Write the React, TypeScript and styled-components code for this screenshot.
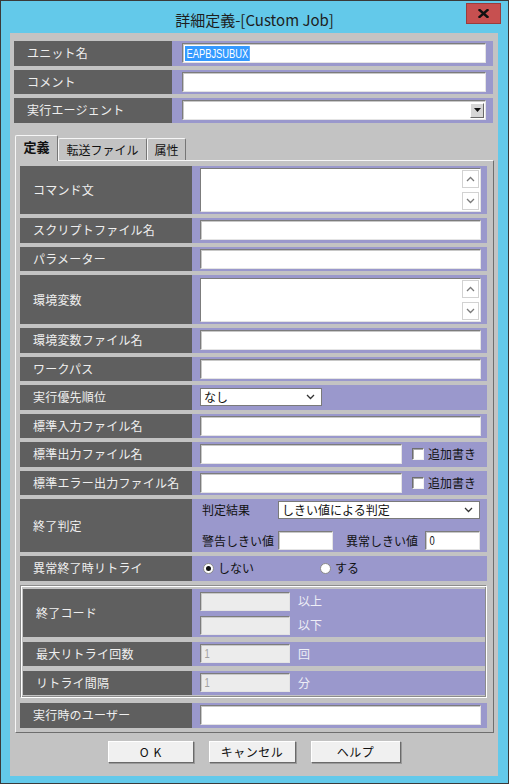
import styled, { createGlobalStyle } from 'styled-components';

const GlobalStyle = createGlobalStyle`
  html, body {
    margin: 0;
    padding: 0;
  }
  body {
    font-family: "Noto Sans CJK JP", "Noto Sans", sans-serif;
    line-height: 14px;
  }
`;

const Window = styled.div`
  box-sizing: border-box;
  width: 509px;
  height: 784px;
  border: 1px solid #3a3a3a;
  background: #63c9ea;
  display: flex;
  flex-direction: column;
`;

const TitleBar = styled.div`
  height: 32px;
  flex-shrink: 0;
  display: grid;
  grid-template-columns: 1fr auto 1fr;
  align-items: start;
`;

const Title = styled.div`
  grid-column: 2;
  padding-top: 9px;
  font-size: 15px;
  line-height: 20px;
  color: #1e1e1e;
  white-space: nowrap;
`;

const CloseButton = styled.div`
  grid-column: 3;
  justify-self: end;
  box-sizing: border-box;
  width: 35px;
  height: 21px;
  margin-top: 2px;
  margin-right: 7px;
  background: #c75050;
  border: 1px solid #9a3c3c;
  display: flex;
  align-items: center;
  justify-content: center;
`;

const Body = styled.div`
  flex: 1;
  margin: 0 10px 7px 9px;
  background: #c3c3c3;
  padding-top: 8px;
  display: flex;
  flex-direction: column;
`;

const TopFields = styled.div`
  margin: 0 5px 0 4px;
  display: flex;
  flex-direction: column;
  gap: 4px;
`;

const Row = styled.div<{ $h?: number; $labelW?: number }>`
  display: grid;
  grid-template-columns: ${(p) => p.$labelW ?? 172}px 1fr;
  height: ${(p) => p.$h ?? 24.5}px;
  flex-shrink: 0;
`;

const RowLabel = styled.div`
  background: #5f5f5f;
  color: #efefef;
  font-size: 12px;
  letter-spacing: 0.2px;
  padding-left: 13px;
  display: flex;
  align-items: center;
  white-space: nowrap;
`;

const RowCell = styled.div<{ $pl?: number; $pr?: number; $col?: boolean; $gap?: number }>`
  background: #9a98cc;
  min-width: 0;
  display: flex;
  flex-direction: ${(p) => (p.$col ? 'column' : 'row')};
  align-items: ${(p) => (p.$col ? 'stretch' : 'center')};
  justify-content: ${(p) => (p.$col ? 'center' : 'flex-start')};
  gap: ${(p) => p.$gap ?? 0}px;
  padding: 0 ${(p) => p.$pr ?? 6}px 0 ${(p) => p.$pl ?? 8}px;
`;

const CellLine = styled.div`
  display: flex;
  align-items: center;
`;

const TextBox = styled.div<{ $w?: number; $h?: number; $disabled?: boolean }>`
  box-sizing: border-box;
  height: ${(p) => p.$h ?? 20}px;
  ${(p) => (p.$w ? `width: ${p.$w}px; flex-shrink: 0;` : 'flex: 1;')}
  background: ${(p) => (p.$disabled ? '#ececec' : '#ffffff')};
  border: 1px solid;
  border-color: #7c7c7c #e4e4e4 #e4e4e4 #7c7c7c;
  box-shadow: inset 1px 1px 0 #c8c8c8;
  padding: 0 1px 0 2px;
  display: flex;
  align-items: center;
  overflow: hidden;
  white-space: nowrap;
  font-family: "Liberation Sans", Arial, sans-serif;
  font-size: 12px;
  color: ${(p) => (p.$disabled ? '#a0a0a0' : '#111111')};
`;

const NarrowText = styled.span<{ $selected?: boolean }>`
  display: inline-block;
  font-family: "Liberation Sans", Arial, sans-serif;
  font-size: 13px;
  line-height: 15px;
  padding: 0 2px;
  transform: scaleX(0.72);
  transform-origin: left center;
  background: ${(p) => (p.$selected ? '#3399ff' : 'transparent')};
  color: ${(p) => (p.$selected ? '#ffffff' : 'inherit')};
`;

const ComboButton = styled.div`
  box-sizing: border-box;
  margin-left: auto;
  width: 14px;
  height: 15px;
  background: #d6d6d6;
  border: 1px solid;
  border-color: #ffffff #6a6a6a #6a6a6a #ffffff;
  display: flex;
  align-items: center;
  justify-content: center;
`;

const MultiBox = styled.div`
  box-sizing: border-box;
  flex: 1;
  height: 44px;
  background: #ffffff;
  border: 1px solid;
  border-color: #7c7c7c #e4e4e4 #e4e4e4 #7c7c7c;
  padding: 1px;
  display: flex;
  justify-content: flex-end;
`;

const ScrollTrack = styled.div`
  width: 17px;
  display: flex;
  flex-direction: column;
  justify-content: space-between;
`;

const ScrollButton = styled.div`
  box-sizing: border-box;
  height: 18px;
  border: 1px solid #d2d2d2;
  background: #ffffff;
  display: flex;
  align-items: center;
  justify-content: center;
`;

const DropSelect = styled.div<{ $w?: number }>`
  box-sizing: border-box;
  height: 18px;
  ${(p) => (p.$w ? `width: ${p.$w}px; flex-shrink: 0;` : 'flex: 1;')}
  background: #ffffff;
  border: 1px solid #7a7a7a;
  padding: 0 6px 0 3px;
  display: flex;
  align-items: center;
  justify-content: space-between;
  font-size: 12px;
  color: #111111;
  white-space: nowrap;
`;

const Caption = styled.span<{ $w?: number; $ml?: number }>`
  font-size: 12px;
  color: #111111;
  white-space: nowrap;
  flex-shrink: 0;
  ${(p) => (p.$w ? `width: ${p.$w}px;` : '')}
  margin-left: ${(p) => p.$ml ?? 0}px;
`;

const UnitText = styled.span`
  font-size: 12px;
  color: #eeeef6;
  margin-left: 8px;
`;

const CheckItem = styled.div`
  display: flex;
  align-items: center;
  gap: 4px;
  margin-left: 10px;
  font-size: 12px;
  color: #111111;
  white-space: nowrap;
`;

const CheckBox = styled.span`
  box-sizing: border-box;
  width: 12px;
  height: 12px;
  background: #ffffff;
  border: 1px solid;
  border-color: #6e6e6e #f2f2f2 #f2f2f2 #6e6e6e;
  box-shadow: inset 1px 1px 0 #a9a9a9;
`;

const RadioItem = styled.div<{ $w?: number }>`
  display: flex;
  align-items: center;
  gap: 4px;
  ${(p) => (p.$w ? `width: ${p.$w}px;` : '')}
  font-size: 12px;
  color: #111111;
  white-space: nowrap;
`;

const Radio = styled.span<{ $on?: boolean }>`
  box-sizing: border-box;
  width: 11px;
  height: 11px;
  border-radius: 50%;
  background: #ffffff;
  border: 1px solid #8a8a8a;
  display: inline-flex;
  align-items: center;
  justify-content: center;
  &::after {
    content: '';
    width: 5px;
    height: 5px;
    border-radius: 50%;
    background: ${(p) => (p.$on ? '#111111' : 'transparent')};
  }
`;

const TabArea = styled.div`
  margin: 12.5px 4px 0 5px;
  display: flex;
  flex-direction: column;
`;

const TabStrip = styled.div`
  height: 25px;
  display: flex;
  align-items: flex-end;
`;

const Tab = styled.div<{ $active?: boolean; $w: number }>`
  box-sizing: border-box;
  position: relative;
  z-index: ${(p) => (p.$active ? 1 : 0)};
  width: ${(p) => p.$w}px;
  height: ${(p) => (p.$active ? 26 : 22)}px;
  margin-bottom: ${(p) => (p.$active ? -1 : 0)}px;
  background: #c3c3c3;
  border: 1px solid;
  border-color: #f6f6f6 #767676 transparent #f6f6f6;
  border-bottom: none;
  border-radius: 2px 2px 0 0;
  display: flex;
  align-items: center;
  justify-content: center;
  padding-bottom: ${(p) => (p.$active ? 3 : 0)}px;
  font-size: ${(p) => (p.$active ? 13 : 12)}px;
  font-weight: ${(p) => (p.$active ? 700 : 400)};
  color: #111111;
  white-space: nowrap;
`;

const TabPanel = styled.div`
  border: 1px solid;
  border-color: #f6f6f6 #6e6e6e #6e6e6e #f6f6f6;
  padding: 5px 6px 4px 4px;
  display: flex;
  flex-direction: column;
  gap: 4px;
`;

const GroupBox = styled.div`
  margin: 0.5px 0 1px;
  border: 1px solid;
  border-color: #8c8c8c #ffffff #ffffff #8c8c8c;
  box-shadow: inset 1px 1px 0 #ffffff, inset -1px -1px 0 #8c8c8c;
  padding: 3px 1px 2.5px 2px;
  display: flex;
  flex-direction: column;
  gap: 4.5px;
`;

const ButtonBar = styled.div`
  margin-top: 8.5px;
  display: flex;
  justify-content: center;
  gap: 15px;
`;

const DialogButton = styled.div<{ $w: number; $spaced?: boolean }>`
  box-sizing: border-box;
  width: ${(p) => p.$w}px;
  height: 22px;
  background: #f0f0f0;
  border: 1px solid;
  border-color: #ffffff #6a6a6a #6a6a6a #ffffff;
  box-shadow: 1px 1px 0 #9a9a9a;
  display: flex;
  align-items: center;
  justify-content: center;
  font-size: 12px;
  color: #111111;
  letter-spacing: ${(p) => (p.$spaced ? 5 : 0.5)}px;
  padding-left: ${(p) => (p.$spaced ? 5 : 0)}px;
`;

const Chevron = ({ up, color = '#7a7a7a' }: { up?: boolean; color?: string }) => (
  <svg width="9" height="6" viewBox="0 0 9 6">
    <polyline
      points={up ? '1,5 4.5,1.5 8,5' : '1,1 4.5,4.5 8,1'}
      fill="none"
      stroke={color}
      strokeWidth="1.3"
    />
  </svg>
);

const Triangle = () => (
  <svg width="7" height="4" viewBox="0 0 7 4">
    <polygon points="0,0 7,0 3.5,4" fill="#111" />
  </svg>
);

const CloseGlyph = () => (
  <svg width="11" height="9" viewBox="0 0 11 9">
    <path d="M1.5 1 L9.5 8 M9.5 1 L1.5 8" stroke="#111" strokeWidth="2.4" strokeLinecap="square" />
  </svg>
);

function MultiLine() {
  return (
    <MultiBox>
      <ScrollTrack>
        <ScrollButton>
          <Chevron up />
        </ScrollButton>
        <ScrollButton>
          <Chevron />
        </ScrollButton>
      </ScrollTrack>
    </MultiBox>
  );
}

export default function App() {
  return (
    <>
      <GlobalStyle />
      <Window>
        <TitleBar>
          <Title>詳細定義-[Custom Job]</Title>
          <CloseButton>
            <CloseGlyph />
          </CloseButton>
        </TitleBar>
        <Body>
          <TopFields>
            <Row $labelW={158}>
              <RowLabel>ユニット名</RowLabel>
              <RowCell $pl={10} $pr={7}>
                <TextBox>
                  <NarrowText $selected>EAPBJSUBUX</NarrowText>
                </TextBox>
              </RowCell>
            </Row>
            <Row $labelW={158}>
              <RowLabel>コメント</RowLabel>
              <RowCell $pl={10} $pr={7}>
                <TextBox />
              </RowCell>
            </Row>
            <Row $labelW={158}>
              <RowLabel>実行エージェント</RowLabel>
              <RowCell $pl={10} $pr={7}>
                <TextBox>
                  <ComboButton>
                    <Triangle />
                  </ComboButton>
                </TextBox>
              </RowCell>
            </Row>
          </TopFields>

          <TabArea>
            <TabStrip>
              <Tab $active $w={43}>定義</Tab>
              <Tab $w={89}>転送ファイル</Tab>
              <Tab $w={39}>属性</Tab>
            </TabStrip>
            <TabPanel>
              <Row $h={48}>
                <RowLabel>コマンド文</RowLabel>
                <RowCell>
                  <MultiLine />
                </RowCell>
              </Row>
              <Row>
                <RowLabel>スクリプトファイル名</RowLabel>
                <RowCell>
                  <TextBox />
                </RowCell>
              </Row>
              <Row>
                <RowLabel>パラメーター</RowLabel>
                <RowCell>
                  <TextBox />
                </RowCell>
              </Row>
              <Row $h={49}>
                <RowLabel>環境変数</RowLabel>
                <RowCell>
                  <MultiLine />
                </RowCell>
              </Row>
              <Row>
                <RowLabel>環境変数ファイル名</RowLabel>
                <RowCell>
                  <TextBox />
                </RowCell>
              </Row>
              <Row>
                <RowLabel>ワークパス</RowLabel>
                <RowCell>
                  <TextBox />
                </RowCell>
              </Row>
              <Row>
                <RowLabel>実行優先順位</RowLabel>
                <RowCell>
                  <DropSelect $w={122}>
                    なし
                    <Chevron color="#333" />
                  </DropSelect>
                </RowCell>
              </Row>
              <Row>
                <RowLabel>標準入力ファイル名</RowLabel>
                <RowCell>
                  <TextBox />
                </RowCell>
              </Row>
              <Row>
                <RowLabel>標準出力ファイル名</RowLabel>
                <RowCell>
                  <TextBox $w={202} />
                  <CheckItem>
                    <CheckBox />
                    追加書き
                  </CheckItem>
                </RowCell>
              </Row>
              <Row>
                <RowLabel>標準エラー出力ファイル名</RowLabel>
                <RowCell>
                  <TextBox $w={202} />
                  <CheckItem>
                    <CheckBox />
                    追加書き
                  </CheckItem>
                </RowCell>
              </Row>
              <Row $h={53}>
                <RowLabel>終了判定</RowLabel>
                <RowCell $col $pl={10} $pr={7} $gap={12}>
                  <CellLine>
                    <Caption $w={76}>判定結果</Caption>
                    <DropSelect>
                      しきい値による判定
                      <Chevron color="#333" />
                    </DropSelect>
                  </CellLine>
                  <CellLine>
                    <Caption $w={76}>警告しきい値</Caption>
                    <TextBox $w={55} $h={19} />
                    <Caption $w={79} $ml={13}>異常しきい値</Caption>
                    <TextBox $w={55} $h={19}>
                      <NarrowText>0</NarrowText>
                    </TextBox>
                  </CellLine>
                </RowCell>
              </Row>
              <Row>
                <RowLabel>異常終了時リトライ</RowLabel>
                <RowCell $pl={11}>
                  <RadioItem $w={117}>
                    <Radio $on />
                    しない
                  </RadioItem>
                  <RadioItem>
                    <Radio />
                    する
                  </RadioItem>
                </RowCell>
              </Row>

              <GroupBox>
                <Row $h={48} $labelW={169}>
                  <RowLabel>終了コード</RowLabel>
                  <RowCell $col $pr={0} $gap={5}>
                    <CellLine>
                      <TextBox $w={90} $h={19} $disabled />
                      <UnitText>以上</UnitText>
                    </CellLine>
                    <CellLine>
                      <TextBox $w={90} $h={19} $disabled />
                      <UnitText>以下</UnitText>
                    </CellLine>
                  </RowCell>
                </Row>
                <Row $labelW={169}>
                  <RowLabel>最大リトライ回数</RowLabel>
                  <RowCell $pr={0}>
                    <TextBox $w={90} $h={19} $disabled>
                      <NarrowText>1</NarrowText>
                    </TextBox>
                    <UnitText>回</UnitText>
                  </RowCell>
                </Row>
                <Row $h={24} $labelW={169}>
                  <RowLabel>リトライ間隔</RowLabel>
                  <RowCell $pr={0}>
                    <TextBox $w={90} $h={19} $disabled>
                      <NarrowText>1</NarrowText>
                    </TextBox>
                    <UnitText>分</UnitText>
                  </RowCell>
                </Row>
              </GroupBox>

              <Row>
                <RowLabel>実行時のユーザー</RowLabel>
                <RowCell>
                  <TextBox />
                </RowCell>
              </Row>
            </TabPanel>
          </TabArea>

          <ButtonBar>
            <DialogButton $w={86} $spaced>
              OK
            </DialogButton>
            <DialogButton $w={87}>キャンセル</DialogButton>
            <DialogButton $w={90}>ヘルプ</DialogButton>
          </ButtonBar>
        </Body>
      </Window>
    </>
  );
}
